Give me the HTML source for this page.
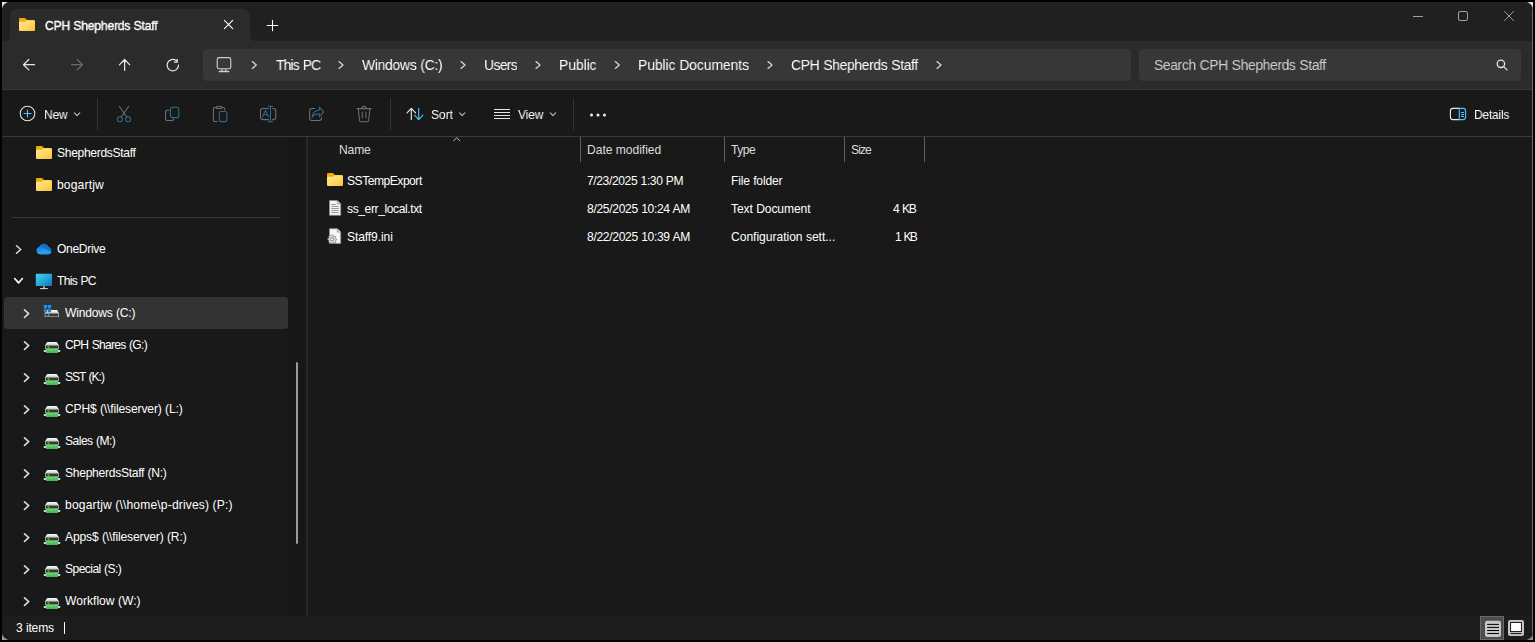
<!DOCTYPE html>
<html lang="en"><head><meta charset="utf-8"><title>CPH Shepherds Staff</title>
<style>
html,body{margin:0;padding:0;background:#000;width:1535px;height:642px;overflow:hidden}
body{position:relative;font-family:"Liberation Sans",sans-serif}
#win{position:absolute;left:2px;top:2px;width:1531px;height:638px;background:#191919;border-radius:8.5px;overflow:hidden}
#win div,#win svg{position:absolute}
#titlebar{left:0;top:0;width:1531px;height:39px;background:#202020}
#tab{left:8px;top:7px;width:240px;height:32px;background:#2b2b2b;border-radius:7px 7px 0 0}
#navrow{left:0;top:39px;width:1531px;height:48px;background:#2b2b2b;border-bottom:1px solid #383838}
#addr{left:201px;top:47px;width:928px;height:32px;background:#373737;border-radius:4px}
#search{left:1137px;top:47px;width:382px;height:32px;background:#373737;border-radius:4px}
#toolbar{left:0;top:88px;width:1531px;height:46px;background:#191919;border-bottom:1px solid #3a3a3a}
#status{left:0;top:614px;width:1531px;height:24px;background:#1c1c1c}
.vsep{width:1px;background:#3a3a3a}
#rborder{left:1530px;top:0;width:1px;height:638px;background:#727272}
.t{position:absolute;white-space:pre;transform-origin:0 0}
#sel{left:2px;top:295px;width:284px;height:32px;background:#333;border-radius:3px}
#ico{position:absolute;left:0;top:0;pointer-events:none}
#texts{position:absolute;left:0;top:0}
.cn{position:absolute;width:10px;height:10px}

</style></head>
<body>
<div class="cn" style="left:2px;top:2px;background:radial-gradient(circle at 0 0,#f4f4f4 0,#c0c0c0 5px,#888 9px)"></div>
<div class="cn" style="left:1523px;top:2px;background:radial-gradient(circle at 100% 0,#f4f4f4 0,#c0c0c0 5px,#888 9px)"></div>
<div class="cn" style="left:2px;top:630px;background:radial-gradient(circle at 0 100%,#aaa 0,#888 5px,#555 8px)"></div>
<div class="cn" style="left:1523px;top:630px;background:radial-gradient(circle at 100% 100%,#999 0,#777 5px,#555 8px)"></div>
<div id="win">
  <div id="titlebar"></div>
  <div id="tab"></div>
  <div style="left:3px;top:34px;width:5px;height:5px;background:radial-gradient(circle at 0 0,#202020 4.6px,#2b2b2b 5.2px)"></div>
  <div style="left:248px;top:34px;width:5px;height:5px;background:radial-gradient(circle at 100% 0,#202020 4.6px,#2b2b2b 5.2px)"></div>
  <div id="navrow"></div>
  <div id="addr"></div>
  <div id="search"></div>
  <div id="toolbar"></div>
  <div class="vsep" style="left:95px;top:96px;height:32px;background:#333"></div>
  <div class="vsep" style="left:388px;top:96px;height:32px;background:#333"></div>
  <div class="vsep" style="left:571px;top:96px;height:32px;background:#333"></div>
  <div style="left:286px;top:135px;width:19px;height:479px;background:#171717"></div>
  <div id="sel"></div>
  <div style="left:10px;top:215px;width:268px;height:1px;background:#3a3a3a"></div>
  <div style="left:304px;top:135px;width:2px;height:479px;background:#292929"></div>
  <div style="left:294px;top:360px;width:2px;height:182px;background:#9a9a9a;border-radius:1px"></div>
  <div class="vsep" style="left:578px;top:135px;height:25px;background:#606060"></div>
  <div class="vsep" style="left:722px;top:135px;height:25px;background:#606060"></div>
  <div class="vsep" style="left:842px;top:135px;height:25px;background:#606060"></div>
  <div class="vsep" style="left:922px;top:135px;height:25px;background:#606060"></div>
  <div id="status"></div>
  <div style="left:62px;top:620px;width:1px;height:12px;background:#fff"></div>
  <div id="rborder"></div>
</div>

<svg id="ico" width="1535" height="642" viewBox="0 0 1535 642"><defs>
<linearGradient id="gfold" x1="0" y1="0" x2="1" y2="1"><stop offset="0" stop-color="#ffe697"/><stop offset=".6" stop-color="#ffd660"/><stop offset="1" stop-color="#f8c02f"/></linearGradient>
<linearGradient id="gtop" x1="0" y1="0" x2="0" y2="1"><stop offset="0" stop-color="#ffffff"/><stop offset="1" stop-color="#c9c9c9"/></linearGradient>
<linearGradient id="ggreen" x1="0" y1="0" x2="0" y2="1"><stop offset="0" stop-color="#62e070"/><stop offset="1" stop-color="#34b84a"/></linearGradient>
<linearGradient id="gpc" x1="0" y1="0" x2="1" y2="1"><stop offset="0" stop-color="#41d6e6"/><stop offset=".55" stop-color="#23a5d6"/><stop offset="1" stop-color="#1670b8"/></linearGradient>
</defs>
<g transform="translate(19.00 18.00)" ><path d="M1.3 0H5.3C5.8 0 6.2.2 6.6.6L8 2H14.7A1.3 1.3 0 0 1 16 3.3V11.4A1.6 1.6 0 0 1 14.4 13H1.6A1.6 1.6 0 0 1 0 11.4V1.3A1.3 1.3 0 0 1 1.3 0Z" fill="#f0ab0c"/><path d="M0 4.8A1 1 0 0 1 1 3.8H5.6C6.1 3.8 6.5 3.6 6.9 3.2L7.8 2.3H14.5A1.5 1.5 0 0 1 16 3.8V11.4A1.6 1.6 0 0 1 14.4 13H1.6A1.6 1.6 0 0 1 0 11.4Z" fill="url(#gfold)"/></g>
<g transform="translate(36.00 146.00)" ><path d="M1.3 0H5.3C5.8 0 6.2.2 6.6.6L8 2H14.7A1.3 1.3 0 0 1 16 3.3V11.4A1.6 1.6 0 0 1 14.4 13H1.6A1.6 1.6 0 0 1 0 11.4V1.3A1.3 1.3 0 0 1 1.3 0Z" fill="#f0ab0c"/><path d="M0 4.8A1 1 0 0 1 1 3.8H5.6C6.1 3.8 6.5 3.6 6.9 3.2L7.8 2.3H14.5A1.5 1.5 0 0 1 16 3.8V11.4A1.6 1.6 0 0 1 14.4 13H1.6A1.6 1.6 0 0 1 0 11.4Z" fill="url(#gfold)"/></g>
<g transform="translate(36.00 178.00)" ><path d="M1.3 0H5.3C5.8 0 6.2.2 6.6.6L8 2H14.7A1.3 1.3 0 0 1 16 3.3V11.4A1.6 1.6 0 0 1 14.4 13H1.6A1.6 1.6 0 0 1 0 11.4V1.3A1.3 1.3 0 0 1 1.3 0Z" fill="#f0ab0c"/><path d="M0 4.8A1 1 0 0 1 1 3.8H5.6C6.1 3.8 6.5 3.6 6.9 3.2L7.8 2.3H14.5A1.5 1.5 0 0 1 16 3.8V11.4A1.6 1.6 0 0 1 14.4 13H1.6A1.6 1.6 0 0 1 0 11.4Z" fill="url(#gfold)"/></g>
<g transform="translate(327.00 173.00)" ><path d="M1.3 0H5.3C5.8 0 6.2.2 6.6.6L8 2H14.7A1.3 1.3 0 0 1 16 3.3V11.4A1.6 1.6 0 0 1 14.4 13H1.6A1.6 1.6 0 0 1 0 11.4V1.3A1.3 1.3 0 0 1 1.3 0Z" fill="#f0ab0c"/><path d="M0 4.8A1 1 0 0 1 1 3.8H5.6C6.1 3.8 6.5 3.6 6.9 3.2L7.8 2.3H14.5A1.5 1.5 0 0 1 16 3.8V11.4A1.6 1.6 0 0 1 14.4 13H1.6A1.6 1.6 0 0 1 0 11.4Z" fill="url(#gfold)"/></g>
<g transform="translate(35.80 243.40)" ><path d="M4.2 10.8A3.6 3.6 0 0 1 3.2 3.8A5.2 5.2 0 0 1 12.8 3.3A3.9 3.9 0 0 1 12.6 10.8Z" fill="#1272c8"/><path d="M3.2 3.8A3.6 3.6 0 0 0 4.2 10.8H12.6A3.9 3.9 0 0 0 15.6 9.3L6.2 4.3A3.7 3.7 0 0 0 3.2 3.8Z" fill="#1f8fe6"/><path d="M9.9 6.3L15.6 9.3A3.9 3.9 0 0 0 12.8 3.3A4.3 4.3 0 0 0 9.9 6.3Z" fill="#2aa6f0" opacity=".0"/><path d="M4.2 10.8H12.6A3.9 3.9 0 0 0 15.9 8.6L9.8 5.6L1.2 9.2A3.6 3.6 0 0 0 4.2 10.8Z" fill="#2ba4ee" opacity=".75"/></g>
<g transform="translate(35.80 273.80)" ><rect x="0" y="0" width="16.2" height="12.2" rx=".8" fill="url(#gpc)"/><rect x="7.2" y="12.2" width="1.8" height="2.2" fill="#9aa4ac"/><rect x="4.2" y="14.2" width="7.8" height="1.1" fill="#c4ccd2"/></g>
<g transform="translate(43.80 305.00)" ><path d="M3.1 5.1H13.4L15.2 8.2H.9Z" fill="url(#gtop)"/><rect x=".9" y="8" width="14.3" height="4" fill="#d2d2d2"/><rect x="1.5" y="8.5" width="13.1" height="3" fill="#383838"/><circle cx="4.7" cy="10" r=".85" fill="#3df03d"/><rect x="0" y="0" width="3.3" height="3.3" fill="#1b93f0"/><rect x="4" y="0" width="3.3" height="3.3" fill="#1b93f0"/><rect x="0" y="3.9" width="3.3" height="3.3" fill="#1480dc"/><rect x="4" y="3.9" width="3.3" height="3.3" fill="#1480dc"/></g>
<g transform="translate(43.80 342.00)" ><path d="M3.4 0H12.9L15.2 3.2H1.2Z" fill="url(#gtop)"/><rect x="1.2" y="3" width="14" height="4" fill="#d2d2d2"/><rect x="1.8" y="3.5" width="12.8" height="3" fill="#383838"/><circle cx="4.7" cy="5" r=".85" fill="#3df03d"/><rect x="0" y="8" width="16.4" height="2" fill="#d4d4d4"/><rect x="2.1" y="7" width="12.2" height="4" rx=".5" fill="url(#ggreen)"/></g>
<g transform="translate(43.80 374.00)" ><path d="M3.4 0H12.9L15.2 3.2H1.2Z" fill="url(#gtop)"/><rect x="1.2" y="3" width="14" height="4" fill="#d2d2d2"/><rect x="1.8" y="3.5" width="12.8" height="3" fill="#383838"/><circle cx="4.7" cy="5" r=".85" fill="#3df03d"/><rect x="0" y="8" width="16.4" height="2" fill="#d4d4d4"/><rect x="2.1" y="7" width="12.2" height="4" rx=".5" fill="url(#ggreen)"/></g>
<g transform="translate(43.80 406.00)" ><path d="M3.4 0H12.9L15.2 3.2H1.2Z" fill="url(#gtop)"/><rect x="1.2" y="3" width="14" height="4" fill="#d2d2d2"/><rect x="1.8" y="3.5" width="12.8" height="3" fill="#383838"/><circle cx="4.7" cy="5" r=".85" fill="#3df03d"/><rect x="0" y="8" width="16.4" height="2" fill="#d4d4d4"/><rect x="2.1" y="7" width="12.2" height="4" rx=".5" fill="url(#ggreen)"/></g>
<g transform="translate(43.80 438.00)" ><path d="M3.4 0H12.9L15.2 3.2H1.2Z" fill="url(#gtop)"/><rect x="1.2" y="3" width="14" height="4" fill="#d2d2d2"/><rect x="1.8" y="3.5" width="12.8" height="3" fill="#383838"/><circle cx="4.7" cy="5" r=".85" fill="#3df03d"/><rect x="0" y="8" width="16.4" height="2" fill="#d4d4d4"/><rect x="2.1" y="7" width="12.2" height="4" rx=".5" fill="url(#ggreen)"/></g>
<g transform="translate(43.80 470.00)" ><path d="M3.4 0H12.9L15.2 3.2H1.2Z" fill="url(#gtop)"/><rect x="1.2" y="3" width="14" height="4" fill="#d2d2d2"/><rect x="1.8" y="3.5" width="12.8" height="3" fill="#383838"/><circle cx="4.7" cy="5" r=".85" fill="#3df03d"/><rect x="0" y="8" width="16.4" height="2" fill="#d4d4d4"/><rect x="2.1" y="7" width="12.2" height="4" rx=".5" fill="url(#ggreen)"/></g>
<g transform="translate(43.80 502.00)" ><path d="M3.4 0H12.9L15.2 3.2H1.2Z" fill="url(#gtop)"/><rect x="1.2" y="3" width="14" height="4" fill="#d2d2d2"/><rect x="1.8" y="3.5" width="12.8" height="3" fill="#383838"/><circle cx="4.7" cy="5" r=".85" fill="#3df03d"/><rect x="0" y="8" width="16.4" height="2" fill="#d4d4d4"/><rect x="2.1" y="7" width="12.2" height="4" rx=".5" fill="url(#ggreen)"/></g>
<g transform="translate(43.80 534.00)" ><path d="M3.4 0H12.9L15.2 3.2H1.2Z" fill="url(#gtop)"/><rect x="1.2" y="3" width="14" height="4" fill="#d2d2d2"/><rect x="1.8" y="3.5" width="12.8" height="3" fill="#383838"/><circle cx="4.7" cy="5" r=".85" fill="#3df03d"/><rect x="0" y="8" width="16.4" height="2" fill="#d4d4d4"/><rect x="2.1" y="7" width="12.2" height="4" rx=".5" fill="url(#ggreen)"/></g>
<g transform="translate(43.80 566.00)" ><path d="M3.4 0H12.9L15.2 3.2H1.2Z" fill="url(#gtop)"/><rect x="1.2" y="3" width="14" height="4" fill="#d2d2d2"/><rect x="1.8" y="3.5" width="12.8" height="3" fill="#383838"/><circle cx="4.7" cy="5" r=".85" fill="#3df03d"/><rect x="0" y="8" width="16.4" height="2" fill="#d4d4d4"/><rect x="2.1" y="7" width="12.2" height="4" rx=".5" fill="url(#ggreen)"/></g>
<g transform="translate(43.80 598.00)" ><path d="M3.4 0H12.9L15.2 3.2H1.2Z" fill="url(#gtop)"/><rect x="1.2" y="3" width="14" height="4" fill="#d2d2d2"/><rect x="1.8" y="3.5" width="12.8" height="3" fill="#383838"/><circle cx="4.7" cy="5" r=".85" fill="#3df03d"/><rect x="0" y="8" width="16.4" height="2" fill="#d4d4d4"/><rect x="2.1" y="7" width="12.2" height="4" rx=".5" fill="url(#ggreen)"/></g>
<path d="M16.50 245.75L20.70 249.50L16.50 253.25" fill="none" stroke="#dadada" stroke-width="1.6" stroke-linecap="round" stroke-linejoin="round"/>
<path d="M14.70 278.55L18.55 282.85L22.40 278.55" fill="none" stroke="#ffffff" stroke-width="1.6" stroke-linecap="round" stroke-linejoin="round"/>
<path d="M24.50 309.85L28.70 313.60L24.50 317.35" fill="none" stroke="#dadada" stroke-width="1.6" stroke-linecap="round" stroke-linejoin="round"/>
<path d="M24.50 341.85L28.70 345.60L24.50 349.35" fill="none" stroke="#dadada" stroke-width="1.6" stroke-linecap="round" stroke-linejoin="round"/>
<path d="M24.50 373.85L28.70 377.60L24.50 381.35" fill="none" stroke="#dadada" stroke-width="1.6" stroke-linecap="round" stroke-linejoin="round"/>
<path d="M24.50 405.85L28.70 409.60L24.50 413.35" fill="none" stroke="#dadada" stroke-width="1.6" stroke-linecap="round" stroke-linejoin="round"/>
<path d="M24.50 437.85L28.70 441.60L24.50 445.35" fill="none" stroke="#dadada" stroke-width="1.6" stroke-linecap="round" stroke-linejoin="round"/>
<path d="M24.50 469.85L28.70 473.60L24.50 477.35" fill="none" stroke="#dadada" stroke-width="1.6" stroke-linecap="round" stroke-linejoin="round"/>
<path d="M24.50 501.85L28.70 505.60L24.50 509.35" fill="none" stroke="#dadada" stroke-width="1.6" stroke-linecap="round" stroke-linejoin="round"/>
<path d="M24.50 533.85L28.70 537.60L24.50 541.35" fill="none" stroke="#dadada" stroke-width="1.6" stroke-linecap="round" stroke-linejoin="round"/>
<path d="M24.50 565.85L28.70 569.60L24.50 573.35" fill="none" stroke="#dadada" stroke-width="1.6" stroke-linecap="round" stroke-linejoin="round"/>
<path d="M24.50 597.85L28.70 601.60L24.50 605.35" fill="none" stroke="#dadada" stroke-width="1.6" stroke-linecap="round" stroke-linejoin="round"/>
<path d="M252.30 61.60L256.30 65.00L252.30 68.40" fill="none" stroke="#d4d4d4" stroke-width="1.35" stroke-linecap="round" stroke-linejoin="round"/>
<path d="M339.00 61.60L343.00 65.00L339.00 68.40" fill="none" stroke="#d4d4d4" stroke-width="1.35" stroke-linecap="round" stroke-linejoin="round"/>
<path d="M461.00 61.60L465.00 65.00L461.00 68.40" fill="none" stroke="#d4d4d4" stroke-width="1.35" stroke-linecap="round" stroke-linejoin="round"/>
<path d="M536.00 61.60L540.00 65.00L536.00 68.40" fill="none" stroke="#d4d4d4" stroke-width="1.35" stroke-linecap="round" stroke-linejoin="round"/>
<path d="M615.30 61.60L619.30 65.00L615.30 68.40" fill="none" stroke="#d4d4d4" stroke-width="1.35" stroke-linecap="round" stroke-linejoin="round"/>
<path d="M768.00 61.60L772.00 65.00L768.00 68.40" fill="none" stroke="#d4d4d4" stroke-width="1.35" stroke-linecap="round" stroke-linejoin="round"/>
<path d="M937.00 61.60L941.00 65.00L937.00 68.40" fill="none" stroke="#d4d4d4" stroke-width="1.35" stroke-linecap="round" stroke-linejoin="round"/><!-- tab close / new tab -->
<g stroke="#fff" stroke-width="1.1" fill="none" stroke-linecap="round">
<path d="M224.4 20.4L232.7 28.7M232.7 20.4L224.4 28.7"/>
<path d="M267.3 25.5H277.8M272.5 20.2V30.8"/>
</g>
<!-- window controls -->
<g stroke="#a2a2a2" stroke-width="1" fill="none">
<path d="M1413 16.5H1423"/>
<rect x="1458.5" y="11.5" width="9" height="9" rx="1.5"/>
<path d="M1504.3 11.2L1513.8 20.8M1513.8 11.2L1504.3 20.8"/>
</g>
<!-- nav arrows -->
<g stroke="#e8e8e8" stroke-width="1.2" fill="none" stroke-linecap="round" stroke-linejoin="round">
<path d="M34.5 64.7H23.7M28.8 59.5L23.5 64.7L28.8 69.9"/>
<path d="M124.6 70.5V59.7M119.4 64.8L124.6 59.5L129.8 64.8"/>
<path d="M178.5 65.2A5.7 5.7 0 1 1 176.2 60.6M177.2 59.3V62.2H174.3" />
</g>
<g stroke="#6c6c6c" stroke-width="1.2" fill="none" stroke-linecap="round" stroke-linejoin="round">
<path d="M71.5 64.7H82.3M77.2 59.5L82.5 64.7L77.2 69.9"/>
</g>
<!-- address bar monitor -->
<g stroke="#d0d0d0" stroke-width="1.1" fill="none" stroke-linejoin="round">
<rect x="217.2" y="57.6" width="13.6" height="11.2" rx="1.8"/>
<path d="M222 69V71.2M225.8 69V71.2" /><path d="M219.3 71.5H228.7" stroke-width="1.4" stroke-linecap="round"/>
</g>
<!-- search icon -->
<g stroke="#e4e4e4" stroke-width="1.3" fill="none" stroke-linecap="round">
<circle cx="1500.9" cy="63.8" r="3.7"/>
<path d="M1503.7 66.6L1507 69.9"/>
</g>
<!-- toolbar: New -->
<circle cx="27.5" cy="113.5" r="7.3" fill="none" stroke="#e2e2e2" stroke-width="1.05"/>
<path d="M24 113.5H31M27.5 110V117" stroke="#4cc2ff" stroke-width="1.2" fill="none" stroke-linecap="round"/>
<!-- small down chevrons -->
<g stroke="#bdbdbd" stroke-width="1.1" fill="none" stroke-linecap="round" stroke-linejoin="round">
<path d="M74.4 112.8L77.1 115.6L79.8 112.8"/>
<path d="M459.6 112.8L462.2 115.6L464.8 112.8"/>
<path d="M550.3 112.8L553 115.6L555.7 112.8"/>
</g>
<!-- cut -->
<g fill="none" stroke-width="1.05" stroke-linecap="round" stroke-linejoin="round">
<g stroke="#707070">
<path d="M119.2 106.2L126.6 116.7M128.8 106.2L121.4 116.7"/>
<path d="M169 110.3H167.6A2.1 2.1 0 0 0 165.5 112.4V118.4A2.1 2.1 0 0 0 167.6 120.5H171.8A2.1 2.1 0 0 0 173.9 119"/>
<path d="M215.6 107.5H214.8A1.4 1.4 0 0 0 213.4 108.9V120.1A1.4 1.4 0 0 0 214.8 121.5H217.3M222.4 107.5H223.2A1.4 1.4 0 0 1 224.6 108.9V109.8"/>
<path d="M216 107.6C216 105.9 222 105.9 222 107.6C222 108.9 216 108.9 216 107.6Z"/>
<path d="M268.4 108.5H263A2.5 2.5 0 0 0 260.5 111V117.1A2.5 2.5 0 0 0 263 119.6H268.4M272.6 108.5H273.3A2.5 2.5 0 0 1 275.8 111V117.1A2.5 2.5 0 0 1 273.3 119.6H272.6"/>
<path d="M314.6 108.5H312A2.4 2.4 0 0 0 309.6 110.9V118.1A2.4 2.4 0 0 0 312 120.5H319.2A2.4 2.4 0 0 0 321.6 118.1V117.5"/>
<path d="M356.9 108.6H371.3M362 108.4C362 105.5 366.2 105.5 366.2 108.4M358.3 108.8L359.5 120.3A1.6 1.6 0 0 0 361.1 121.7H367.1A1.6 1.6 0 0 0 368.7 120.3L369.9 108.8M362.3 112V117.7M365.9 112V117.7"/>
</g>
<g stroke="#2f6d8f">
<circle cx="119.9" cy="119.2" r="2.5"/><circle cx="128.1" cy="119.2" r="2.5"/>
<rect x="170.5" y="107.2" width="8.3" height="10.4" rx="2.1"/>
<rect x="219.3" y="111.4" width="7.6" height="10.2" rx="1.5"/>
<path d="M270.5 106.2V121.8M268.2 106.2H272.8M268.2 121.8H272.8"/>
<path d="M262.5 116.9L265.5 110.4L268.5 116.9M263.5 114.8H267.5"/>
<path d="M319.4 107.2L323.6 111.9L319.4 116.6V114.1C316 113.9 313.6 115 312.1 117.2C312.5 113.2 315 110.4 319.4 109.9Z"/>
</g>
</g>
<!-- sort -->
<g fill="none" stroke-width="1.15" stroke-linecap="round" stroke-linejoin="round">
<path d="M411.3 119.6V108.5M407 112.9L411.3 108.4L415.6 112.9" stroke="#e6e6e6"/>
<path d="M418.7 108.4V119.5M414.4 115.2L418.7 119.7L423 115.2" stroke="#4cc2ff"/>
</g>
<!-- view -->
<path d="M494 109.5H510M494 112.5H510M494 115.5H510M494 118.5H510" stroke="#e6e6e6" stroke-width="1" fill="none"/>
<!-- more -->
<g fill="#f0f0f0"><circle cx="591.5" cy="114.9" r="1.5"/><circle cx="598" cy="114.9" r="1.5"/><circle cx="604.5" cy="114.9" r="1.5"/></g>
<!-- details pane icon -->
<g fill="none" stroke-width="1.1" stroke-linecap="round">
<path d="M1459.2 108.4H1453A2.6 2.6 0 0 0 1450.4 111V117A2.6 2.6 0 0 0 1453 119.6H1459.2" stroke="#e8e8e8"/>
<path d="M1459.3 108.4H1463A2.6 2.6 0 0 1 1465.6 111V117A2.6 2.6 0 0 1 1463 119.6H1459.3Z" stroke="#4cc2ff"/>
<path d="M1461.3 112.5H1463.7M1461.3 114.5H1463.7M1461.3 116.5H1463.7" stroke="#4cc2ff" stroke-width="1"/>
</g>
<!-- header sort arrow -->
<path d="M453.3 141.1L456.7 137.7L460.1 141.1" fill="none" stroke="#b8b8b8" stroke-width="1"/>
<!-- text file icon -->
<g>
<path d="M329.5 200.6H337.3L340.7 204V215.3H329.5Z" fill="#f6f6f6" stroke="#8e8e8e" stroke-width=".8"/>
<path d="M337.3 200.6V204H340.7" fill="#dcdcdc" stroke="#8e8e8e" stroke-width=".7"/>
<path d="M331.3 204.5H336M331.3 206.5H338.8M331.3 208.5H338.8M331.3 210.5H338.8M331.3 212.5H338.8" stroke="#8a8a8a" stroke-width=".9"/>
</g>
<!-- ini file icon -->
<g>
<path d="M329.5 228.7H337.3L340.7 232.1V243.4H329.5Z" fill="#f6f6f6" stroke="#8e8e8e" stroke-width=".8"/>
<path d="M337.3 228.7V232.1H340.7" fill="#dcdcdc" stroke="#8e8e8e" stroke-width=".7"/>
<g transform="translate(332.2 238.8)">
<path d="M-.8-4.6H.8L1.2-3.3L2.3-2.8L3.5-3.5L4.6-2.3L3.9-1.2L4.3 0L5.5 .5V1.6L4.2 2L3.7 3.1L4.3 4.3L3.2 5.2L2.1 4.5L.9 4.9L.5 5.6H-.9L-1.3 4.6L-2.4 4.1L-3.6 4.7L-4.6 3.6L-4 2.5L-4.4 1.4L-5.5 1V-.4L-4.3-.8L-3.8-1.9L-4.4-3L-3.3-4.1L-2.2-3.4L-1.1-3.8Z" fill="#d9d9d9" stroke="#6b6b6b" stroke-width=".7" transform="scale(.82)"/>
<circle cx="0" cy=".4" r="1.5" fill="#f2f2f2" stroke="#6b6b6b" stroke-width=".7"/>
</g>
</g>
<!-- bottom-right view buttons -->
<rect x="1480.5" y="616.5" width="23" height="23" fill="#4d4d4d" stroke="#686868" stroke-width="1"/>
<rect x="1485" y="620.8" width="16" height="16.2" rx="2.2" fill="#c6c6c6"/>
<path d="M1487.2 624.4H1499M1487.2 627.4H1499M1487.2 630.5H1499M1487.2 633.5H1499" stroke="#000" stroke-width="1"/>
<rect x="1508" y="620" width="16" height="16" rx="2.2" fill="#c6c6c6"/>
<rect x="1510.6" y="622.4" width="10.8" height="9.2" fill="#fff" stroke="#000" stroke-width=".9"/>
<path d="M1510.4 633.6H1521.6" stroke="#000" stroke-width=".9"/>
</svg>
<div id="texts">
<span class="t" style="left:44.5px;top:17.00px;font-size:13px;line-height:17px;letter-spacing:-0.188px;word-spacing:0.188px;color:#fff;font-weight:400;transform:scaleX(0.93);-webkit-text-stroke:.4px #fff;will-change:transform;">CPH Shepherds Staff</span>
<span class="t" style="left:275.8px;top:54.80px;font-size:15px;line-height:20px;letter-spacing:-0.960px;word-spacing:0.960px;color:#fff;font-weight:400;transform:scaleX(0.93);will-change:transform;">This PC</span>
<span class="t" style="left:361.5px;top:54.80px;font-size:15px;line-height:20px;letter-spacing:-0.329px;word-spacing:0.329px;color:#fff;font-weight:400;transform:scaleX(0.93);will-change:transform;">Windows (C:)</span>
<span class="t" style="left:483.5px;top:54.80px;font-size:15px;line-height:20px;letter-spacing:-0.700px;word-spacing:0.700px;color:#fff;font-weight:400;transform:scaleX(0.93);will-change:transform;">Users</span>
<span class="t" style="left:558.5px;top:54.80px;font-size:15px;line-height:20px;letter-spacing:-0.098px;word-spacing:0.098px;color:#fff;font-weight:400;transform:scaleX(0.93);will-change:transform;">Public</span>
<span class="t" style="left:637.5px;top:54.80px;font-size:15px;line-height:20px;letter-spacing:-0.106px;word-spacing:0.106px;color:#fff;font-weight:400;transform:scaleX(0.93);will-change:transform;">Public Documents</span>
<span class="t" style="left:790.5px;top:54.80px;font-size:15px;line-height:20px;letter-spacing:-0.399px;word-spacing:0.399px;color:#fff;font-weight:400;transform:scaleX(0.93);will-change:transform;">CPH Shepherds Staff</span>
<span class="t" style="left:1153.5px;top:54.80px;font-size:15px;line-height:20px;letter-spacing:-0.440px;word-spacing:0.440px;color:#cfcfcf;font-weight:400;transform:scaleX(0.93);will-change:transform;">Search CPH Shepherds Staff</span>
<span class="t" style="left:43.9px;top:106.00px;font-size:13px;line-height:17px;letter-spacing:-0.256px;word-spacing:0.256px;color:#fff;font-weight:400;transform:scaleX(0.93);will-change:transform;">New</span>
<span class="t" style="left:430.5px;top:106.00px;font-size:13px;line-height:17px;letter-spacing:-0.115px;word-spacing:0.115px;color:#fff;font-weight:400;transform:scaleX(0.93);will-change:transform;">Sort</span>
<span class="t" style="left:517.5px;top:106.00px;font-size:13px;line-height:17px;letter-spacing:-0.183px;word-spacing:0.183px;color:#fff;font-weight:400;transform:scaleX(0.93);will-change:transform;">View</span>
<span class="t" style="left:1474.3px;top:106.00px;font-size:13px;line-height:17px;letter-spacing:-0.292px;word-spacing:0.292px;color:#fff;font-weight:400;transform:scaleX(0.93);will-change:transform;">Details</span>
<span class="t" style="left:56.7px;top:144.00px;font-size:13px;line-height:17px;letter-spacing:-0.345px;word-spacing:0.345px;color:#fff;font-weight:400;transform:scaleX(0.93);">ShepherdsStaff</span>
<span class="t" style="left:56.7px;top:176.00px;font-size:13px;line-height:17px;letter-spacing:0.158px;word-spacing:-0.158px;color:#fff;font-weight:400;transform:scaleX(0.93);">bogartjw</span>
<span class="t" style="left:57.0px;top:240.00px;font-size:13px;line-height:17px;letter-spacing:-0.370px;word-spacing:0.370px;color:#fff;font-weight:400;transform:scaleX(0.93);">OneDrive</span>
<span class="t" style="left:57.0px;top:272.00px;font-size:13px;line-height:17px;letter-spacing:-0.743px;word-spacing:0.743px;color:#fff;font-weight:400;transform:scaleX(0.93);">This PC</span>
<span class="t" style="left:64.9px;top:304.00px;font-size:13px;line-height:17px;letter-spacing:-0.221px;word-spacing:0.221px;color:#fff;font-weight:400;transform:scaleX(0.93);">Windows (C:)</span>
<span class="t" style="left:64.9px;top:336.00px;font-size:13px;line-height:17px;letter-spacing:-0.780px;word-spacing:0.780px;color:#fff;font-weight:400;transform:scaleX(0.93);">CPH Shares (G:)</span>
<span class="t" style="left:64.9px;top:368.00px;font-size:13px;line-height:17px;letter-spacing:-1.114px;word-spacing:1.114px;color:#fff;font-weight:400;transform:scaleX(0.93);">SST (K:)</span>
<span class="t" style="left:64.9px;top:400.00px;font-size:13px;line-height:17px;letter-spacing:-0.166px;word-spacing:0.166px;color:#fff;font-weight:400;transform:scaleX(0.93);">CPH$ (\\fileserver) (L:)</span>
<span class="t" style="left:64.9px;top:432.00px;font-size:13px;line-height:17px;letter-spacing:-0.568px;word-spacing:0.568px;color:#fff;font-weight:400;transform:scaleX(0.93);">Sales (M:)</span>
<span class="t" style="left:64.9px;top:464.00px;font-size:13px;line-height:17px;letter-spacing:-0.309px;word-spacing:0.309px;color:#fff;font-weight:400;transform:scaleX(0.93);">ShepherdsStaff (N:)</span>
<span class="t" style="left:64.9px;top:496.00px;font-size:13px;line-height:17px;letter-spacing:0.163px;word-spacing:-0.163px;color:#fff;font-weight:400;transform:scaleX(0.93);">bogartjw (\\home\p-drives) (P:)</span>
<span class="t" style="left:64.9px;top:528.00px;font-size:13px;line-height:17px;letter-spacing:-0.161px;word-spacing:0.161px;color:#fff;font-weight:400;transform:scaleX(0.93);">Apps$ (\\fileserver) (R:)</span>
<span class="t" style="left:64.9px;top:560.00px;font-size:13px;line-height:17px;letter-spacing:-0.604px;word-spacing:0.604px;color:#fff;font-weight:400;transform:scaleX(0.93);">Special (S:)</span>
<span class="t" style="left:64.9px;top:592.00px;font-size:13px;line-height:17px;letter-spacing:0.013px;word-spacing:-0.013px;color:#fff;font-weight:400;transform:scaleX(0.93);">Workflow (W:)</span>
<span class="t" style="left:15.5px;top:619.00px;font-size:13px;line-height:17px;letter-spacing:-0.190px;word-spacing:0.190px;color:#fff;font-weight:400;transform:scaleX(0.93);">3 items</span>
<span class="t" style="left:339.1px;top:141.00px;font-size:13px;line-height:17px;letter-spacing:-0.172px;word-spacing:0.172px;color:#dcdcdc;font-weight:400;transform:scaleX(0.93);">Name</span>
<span class="t" style="left:586.9px;top:141.00px;font-size:13px;line-height:17px;letter-spacing:-0.038px;word-spacing:0.038px;color:#dcdcdc;font-weight:400;transform:scaleX(0.93);">Date modified</span>
<span class="t" style="left:731.0px;top:141.00px;font-size:13px;line-height:17px;letter-spacing:-0.527px;word-spacing:0.527px;color:#dcdcdc;font-weight:400;transform:scaleX(0.93);">Type</span>
<span class="t" style="left:850.5px;top:141.00px;font-size:13px;line-height:17px;letter-spacing:-0.991px;word-spacing:0.991px;color:#dcdcdc;font-weight:400;transform:scaleX(0.93);">Size</span>
<span class="t" style="left:346.5px;top:172.00px;font-size:13px;line-height:17px;letter-spacing:-0.527px;word-spacing:0.527px;color:#fff;font-weight:400;transform:scaleX(0.93);">SSTempExport</span>
<span class="t" style="left:586.9px;top:172.00px;font-size:13px;line-height:17px;letter-spacing:-0.428px;word-spacing:0.428px;color:#fff;font-weight:400;transform:scaleX(0.93);">7/23/2025 1:30 PM</span>
<span class="t" style="left:731.0px;top:172.00px;font-size:13px;line-height:17px;letter-spacing:-0.179px;word-spacing:0.179px;color:#fff;font-weight:400;transform:scaleX(0.93);">File folder</span>
<span class="t" style="left:346.5px;top:200.00px;font-size:13px;line-height:17px;letter-spacing:-0.437px;word-spacing:0.437px;color:#fff;font-weight:400;transform:scaleX(0.93);">ss_err_local.txt</span>
<span class="t" style="left:586.9px;top:200.00px;font-size:13px;line-height:17px;letter-spacing:-0.356px;word-spacing:0.356px;color:#fff;font-weight:400;transform:scaleX(0.93);">8/25/2025 10:24 AM</span>
<span class="t" style="left:731.0px;top:200.00px;font-size:13px;line-height:17px;letter-spacing:-0.106px;word-spacing:0.106px;color:#fff;font-weight:400;transform:scaleX(0.93);">Text Document</span>
<span class="t" style="left:893.2px;top:200.00px;font-size:13px;line-height:17px;letter-spacing:-1.253px;word-spacing:1.253px;color:#fff;font-weight:400;transform:scaleX(0.93);">4 KB</span>
<span class="t" style="left:346.5px;top:228.00px;font-size:13px;line-height:17px;letter-spacing:-0.117px;word-spacing:0.117px;color:#fff;font-weight:400;transform:scaleX(0.93);">Staff9.ini</span>
<span class="t" style="left:586.9px;top:228.00px;font-size:13px;line-height:17px;letter-spacing:-0.356px;word-spacing:0.356px;color:#fff;font-weight:400;transform:scaleX(0.93);">8/22/2025 10:39 AM</span>
<span class="t" style="left:731.0px;top:228.00px;font-size:13px;line-height:17px;letter-spacing:-0.030px;word-spacing:0.030px;color:#fff;font-weight:400;transform:scaleX(0.93);">Configuration sett...</span>
<span class="t" style="left:894.5px;top:228.00px;font-size:13px;line-height:17px;letter-spacing:-1.813px;word-spacing:1.813px;color:#fff;font-weight:400;transform:scaleX(0.93);">1 KB</span>
</div>
</body></html>
